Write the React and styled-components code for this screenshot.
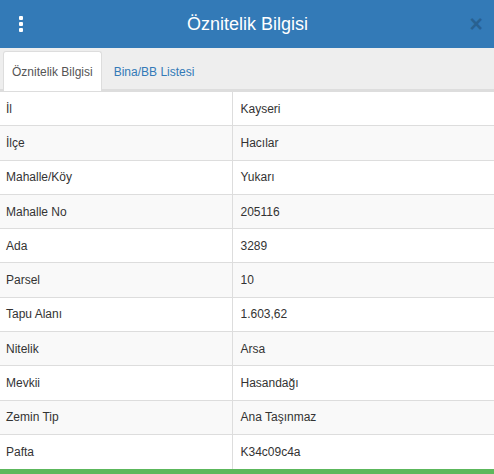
import React from "react"
import styled, { createGlobalStyle } from "styled-components"

const GlobalStyle = createGlobalStyle`
  html, body {
    margin: 0;
    padding: 0;
    background: #fff;
    font-family: "Liberation Sans", Arial, sans-serif;
    color: #333;
  }
`;

const Panel = styled.div`
  width: 494px;
  height: 474px;
  display: flex;
  flex-direction: column;
  overflow: hidden;
`;

const Header = styled.header`
  height: 48px;
  flex: none;
  display: grid;
  grid-template-columns: 1fr auto 1fr;
  align-items: center;
  padding: 0 11px 0 12px;
  background: #337ab7;
  color: #fff;
`;

const Kebab = styled.div`
  display: flex;
  flex-direction: column;
  gap: 2px;
  margin-left: 7px;
  span {
    width: 4px;
    height: 4px;
    border-radius: 1px;
    background: #fff;
  }
`;

const Title = styled.h1`
  margin: 0;
  font-size: 18px;
  font-weight: normal;
`;

const Close = styled.button`
  justify-self: end;
  border: 0;
  background: none;
  padding: 0;
  font-family: "Liberation Sans", Arial, sans-serif;
  font-size: 23px;
  font-weight: bold;
  line-height: 1;
  color: #000;
  opacity: 0.2;
`;

const TabBar = styled.nav`
  flex: none;
  display: flex;
  align-items: flex-end;
  height: 43px;
  padding: 0 3px;
  background: #eee;
  border-bottom: 2px solid #ddd;
  box-sizing: border-box;
`;

const Tab = styled.div`
  height: 40px;
  margin-bottom: -2px;
  padding: 0 8px;
  display: flex;
  align-items: center;
  font-size: 12px;
  box-sizing: border-box;
  color: ${p => (p.active ? "#555" : "#337ab7")};
  background: ${p => (p.active ? "#fff" : "transparent")};
  border: 1px solid ${p => (p.active ? "#ddd" : "transparent")};
  border-bottom: 0;
  border-radius: 3px 3px 0 0;
  & + & {
    margin-left: 3px;
  }
`;

const Table = styled.table`
  width: 100%;
  border-collapse: collapse;
  font-size: 12px;
`;

const Row = styled.tr`
  background: ${p => (p.striped ? "#f9f9f9" : "#fff")};
`;

const Cell = styled.td`
  height: 34.3px;
  box-sizing: border-box;
  padding: 0 8px;
  border-top: 1px solid #ddd;
  color: #333;
  &:first-child {
    width: 232px;
    padding-left: 6px;
    border-right: 1px solid #ddd;
  }
`;

const Footer = styled.div`
  margin-top: auto;
  height: 7px;
  flex: none;
  background: #5cb85c;
`;

const rows = [
  ["İl", "Kayseri"],
  ["İlçe", "Hacılar"],
  ["Mahalle/Köy", "Yukarı"],
  ["Mahalle No", "205116"],
  ["Ada", "3289"],
  ["Parsel", "10"],
  ["Tapu Alanı", "1.603,62"],
  ["Nitelik", "Arsa"],
  ["Mevkii", "Hasandağı"],
  ["Zemin Tip", "Ana Taşınmaz"],
  ["Pafta", "K34c09c4a"],
];

export default function App() {
  return (
    <>
      <GlobalStyle />
      <Panel>
        <Header>
          <Kebab>
            <span />
            <span />
            <span />
          </Kebab>
          <Title>Öznitelik Bilgisi</Title>
          <Close>&times;</Close>
        </Header>
        <TabBar>
          <Tab active>Öznitelik Bilgisi</Tab>
          <Tab>Bina/BB Listesi</Tab>
        </TabBar>
        <Table>
          <tbody>
            {rows.map(([k, v], i) => (
              <Row key={k} striped={i % 2 === 1}>
                <Cell>{k}</Cell>
                <Cell>{v}</Cell>
              </Row>
            ))}
          </tbody>
        </Table>
        <Footer />
      </Panel>
    </>
  );
}
